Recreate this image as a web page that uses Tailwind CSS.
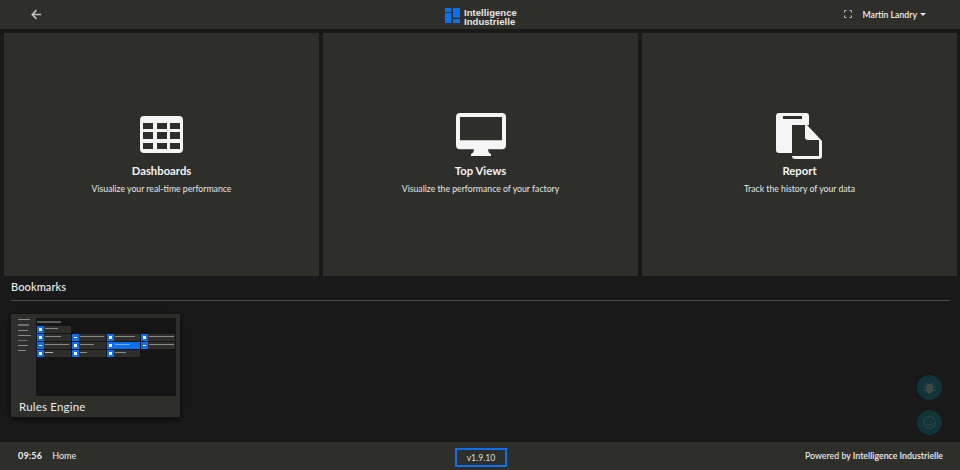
<!DOCTYPE html>
<html lang="en">
<head>
<meta charset="utf-8">
<title>Home</title>
<script src="https://cdn.jsdelivr.net/npm/@tailwindcss/browser@4"></script>
</head>
<body class="bg-[#191919] overflow-hidden">
<div class="w-[960px] h-[470px] flex flex-col font-['Lato','Liberation_Sans',sans-serif] text-white bg-[#191919] relative">
  <header class="h-[29px] shrink-0 bg-[#2e2f2a] flex items-center relative">
    <svg class="ml-[31px] w-[11px] h-[11px] text-[#c4c4c2]" viewBox="0 0 12 12" fill="none" stroke="currentColor" stroke-width="1.7"><path d="M11 6H1.5M6 1.2 1.3 6 6 10.8"/></svg>
    <div class="absolute left-[445px] top-[8px] flex items-start gap-[4px]">
      <svg class="w-[15px] h-[15px]" viewBox="0 0 15 15" fill="#0a72f0"><rect x="0" y="0" width="6.500" height="4"/><rect x="0" y="5" width="6.500" height="10"/><rect x="8" y="0" width="7" height="9.500"/><rect x="8" y="11" width="7" height="4"/></svg>
      <div class="text-[9.5px] leading-[9px] font-bold text-[#e8e8e8] tracking-[0.05px] font-['Liberation_Sans',sans-serif]"><div>Intelligence</div><div>Industrielle</div></div>
    </div>
    <div class="ml-auto flex items-center">
      <svg class="w-[8px] h-[8px] mr-[11px] text-[#bdbdbb]" viewBox="0 0 8 8" fill="none" stroke="currentColor" stroke-width="1"><path d="M.5 2.5v-2h2M5.5.5h2v2M7.5 5.5v2h-2M2.5 7.5h-2v-2"/></svg>
      <span class="text-[8.7px] font-semibold text-[#f0f0f0]">Martin Landry</span>
      <span class="ml-[3px] mr-[34px] w-0 h-0 border-x-[3px] border-x-transparent border-t-[3px] border-t-[#e8e8e8]"></span>
    </div>
  </header>

  <main class="grid grid-cols-[315px_315px_315px] gap-x-[4px] pl-[4px] pt-[4px] h-[247px] shrink-0">
    <a class="bg-[#2e2f2a] flex flex-col items-center">
      <svg class="mt-[83px] w-[43px] h-[37px]" viewBox="0 0 43 37" fill="#f5f5f5"><path fill-rule="evenodd" d="M4 0h35a4 4 0 0 1 4 4v29a4 4 0 0 1-4 4H4a4 4 0 0 1-4-4V4a4 4 0 0 1 4-4ZM3 7v6h10V7Zm14 0v6h10V7Zm13 0v6h10V7ZM3 16v7h10v-7Zm14 0v7h10v-7Zm13 0v7h10v-7ZM3 27v6h10v-6Zm14 0v6h10v-6Zm13 0v6h10v-6Z"/></svg>
      <h2 class="mt-[11px] text-[11.3px] leading-[14px] font-bold text-[#f4f4f4]">Dashboards</h2>
      <p class="mt-[4px] text-[8.7px] leading-[14px] text-[#e6e6e6]">Visualize your real-time performance</p>
    </a>
    <a class="bg-[#2e2f2a] flex flex-col items-center">
      <svg class="mt-[80px] w-[50px] h-[43px]" viewBox="0 0 50 44" preserveAspectRatio="none" fill="#f5f5f5"><path fill-rule="evenodd" d="M4 0h42a4 4 0 0 1 4 4v29a4 4 0 0 1-4 4H32c.3 3 1 4 3 5v2H15v-2c2-1 2.700-2 3-5H4a4 4 0 0 1-4-4V4a4 4 0 0 1 4-4Zm0 4v24h42V4Z"/></svg>
      <h2 class="mt-[8px] text-[11.3px] leading-[14px] font-bold text-[#f4f4f4]">Top Views</h2>
      <p class="mt-[4px] text-[8.7px] leading-[14px] text-[#e6e6e6]">Visualize the performance of your factory</p>
    </a>
    <a class="bg-[#2e2f2a] flex flex-col items-center">
      <svg class="mt-[80px] w-[47px] h-[47px]" viewBox="0 0 47 47" fill="#f5f5f5"><path fill-rule="evenodd" d="M3 0h27a3 3 0 0 1 3 3v9h-2l15 16v15a3 3 0 0 1-3 3H19a3 3 0 0 1-3-3v-3H3a3 3 0 0 1-3-3V3a3 3 0 0 1 3-3Zm4 3v3h19V3Zm9 9v31h27V27H32a3 3 0 0 1-3-3V12Z"/></svg>
      <h2 class="mt-[4px] text-[11.3px] leading-[14px] font-bold text-[#f4f4f4]">Report</h2>
      <p class="mt-[4px] text-[8.7px] leading-[14px] text-[#e6e6e6]">Track the history of your data</p>
    </a>
  </main>

  <section class="flex-1 px-[11px] pt-[3px]">
    <h3 class="text-[11px] leading-[15px] font-medium text-[#eeeeee] tracking-[0.1px]">Bookmarks</h3>
    <div class="mt-[6px] h-px bg-[#4a4a48] w-[939px]"></div>
    <article class="mt-[13px] w-[169px] h-[103px] bg-[#2e2f2a] shadow-[0_2px_8px_rgba(0,0,0,0.6)] px-[5px] pt-[4px] flex flex-col">
      <div class="w-[160px] h-[78px] bg-[#151515] flex overflow-hidden">
        <div class="w-[20px] bg-[#2e2e2e] shrink-0 flex flex-col gap-[4px] pl-[2px] pt-[1px]">
          <div class="h-px w-[12px] bg-[#8a8a88]"></div>
          <div class="h-[2px] w-[11px] bg-[#6f6f6d]"></div>
          <div class="h-px w-[10px] bg-[#8a8a88]"></div>
          <div class="h-px w-[13px] bg-[#8a8a88]"></div>
          <div class="h-px w-[9px] bg-[#6f6f6d]"></div>
          <div class="h-px w-[10px] bg-[#8a8a88]"></div>
          <div class="h-px w-[8px] bg-[#8a8a88]"></div>
        </div>
        <div class="pl-px pt-[3px] flex-1">
          <div class="h-[2px] w-[24px] bg-[#5b5b59] mb-[3px]"></div>
          <div class="grid grid-cols-[34px_34px_33px_34px] auto-rows-[7px] gap-x-px gap-y-px">
            <div class="bg-[#2e2f2a] flex"><span class="w-[7px] bg-[#0a6ff0] flex items-center justify-center"><span class="w-[3px] h-[3px] bg-white"></span></span><span class="ml-px mt-[2px] h-px w-[13px] bg-[#8a8a88]"></span></div>
            <div></div><div></div><div></div>
            <div class="bg-[#2e2f2a] flex"><span class="w-[7px] bg-[#0a6ff0] flex items-center justify-center"><span class="w-[3px] h-[3px] bg-white"></span></span><span class="ml-px mt-[2px] h-px w-[16px] bg-[#8a8a88]"></span></div>
            <div class="bg-[#2e2f2a] flex"><span class="w-[7px] bg-[#0a6ff0] flex items-center justify-center"><span class="w-[3px] h-px bg-white"></span></span><span class="ml-px mt-[2px] h-px w-[24px] bg-[#8a8a88]"></span></div>
            <div class="bg-[#2e2f2a] flex"><span class="w-[7px] bg-[#0a6ff0] flex items-center justify-center"><span class="w-[3px] h-[3px] bg-white"></span></span><span class="ml-px mt-[2px] h-px w-[20px] bg-[#8a8a88]"></span></div>
            <div class="bg-[#2e2f2a] flex"><span class="w-[7px] bg-[#0a6ff0] flex items-center justify-center"><span class="w-[3px] h-[3px] bg-white"></span></span><span class="ml-px mt-[2px] h-px w-[25px] bg-[#8a8a88]"></span></div>
            <div class="bg-[#2e2f2a] flex"><span class="w-[7px] bg-[#0a6ff0] flex items-center justify-center"><span class="w-[3px] h-px bg-white"></span></span><span class="ml-px mt-[2px] h-px w-[24px] bg-[#8a8a88]"></span></div>
            <div class="bg-[#2e2f2a] flex"><span class="w-[7px] bg-[#0a6ff0] flex items-center justify-center"><span class="w-[3px] h-[3px] bg-white"></span></span><span class="ml-px mt-[2px] h-px w-[14px] bg-[#8a8a88]"></span></div>
            <div class="bg-[#0a6ff0] flex"><span class="w-[7px] bg-[#0a6ff0] flex items-center justify-center"><span class="w-[3px] h-[3px] bg-white"></span></span><span class="ml-px mt-[2px] h-px w-[15px] bg-[#6fb0f8]"></span></div>
            <div class="bg-[#2e2f2a] flex"><span class="w-[7px] bg-[#0a6ff0] flex items-center justify-center"><span class="w-[3px] h-px bg-white"></span></span><span class="ml-px mt-[2px] h-px w-[25px] bg-[#8a8a88]"></span></div>
            <div class="bg-[#2e2f2a] flex"><span class="w-[7px] bg-[#0a6ff0] flex items-center justify-center"><span class="w-[3px] h-[3px] bg-white"></span></span><span class="ml-px mt-[2px] h-px w-[8px] bg-[#b5b5b3]"></span></div>
            <div class="bg-[#2e2f2a] flex"><span class="w-[7px] bg-[#0a6ff0] flex items-center justify-center"><span class="w-[3px] h-[3px] bg-white"></span></span><span class="ml-px mt-[2px] h-px w-[7px] bg-[#8a8a88]"></span></div>
            <div class="bg-[#2e2f2a] flex"><span class="w-[7px] bg-[#0a6ff0] flex items-center justify-center"><span class="w-[3px] h-[3px] bg-white"></span></span><span class="ml-px mt-[2px] h-px w-[11px] bg-[#8a8a88]"></span></div>
          </div>
        </div>
      </div>
      <div class="mt-[3px] text-[11.5px] leading-[15px] text-[#ececec] ml-[3px] tracking-[0.2px]">Rules Engine</div>
    </article>
  </section>

  <div class="absolute left-[917px] top-[375px] w-[25px] h-[25px] rounded-full bg-[#11343b] flex items-center justify-center">
    <svg class="w-[13px] h-[13px] text-[#3d4a40]" viewBox="0 0 12 12" fill="currentColor"><ellipse cx="6" cy="7" rx="3.500" ry="4.500"/><path d="M3.500 1.500 5 3h2l1.500-1.500.5.5L8 3.500H4L3 2ZM0 5h2.500v1H0Zm9.500 0H12v1H9.500ZM0 8h2.500v1H0Zm9.500 0H12v1H9.500Z"/></svg>
  </div>
  <div class="absolute left-[917px] top-[410px] w-[25px] h-[25px] rounded-full bg-[#11343b] flex items-center justify-center">
    <svg class="w-[13px] h-[13px] text-[#3d4a40]" viewBox="0 0 12 12" fill="none" stroke="currentColor" stroke-width="0.9"><circle cx="6" cy="6" r="5.300"/><path d="M3.500 7.200c1.200 1.600 3.800 1.600 5 0M4 4.500h.6M7.400 4.500H8"/></svg>
  </div>

  <footer class="h-[28px] shrink-0 bg-[#2e2f2a] flex items-center relative text-[9px] text-[#f0f0f0]">
    <span class="ml-[18px] font-bold tracking-[0.2px]">09:56</span>
    <span class="ml-[10px]">Home</span>
    <div class="absolute left-[455px] top-[6px] w-[52px] h-[19px] border-2 border-[#0a6ff0] flex items-center justify-center text-[8.7px] text-[#dcdcdc]">v1.9.10</div>
    <span class="ml-auto mr-[17px] text-[8.8px] font-medium">Powered by <span class="font-semibold">Intelligence Industrielle</span></span>
  </footer>
</div>
</body>
</html>
